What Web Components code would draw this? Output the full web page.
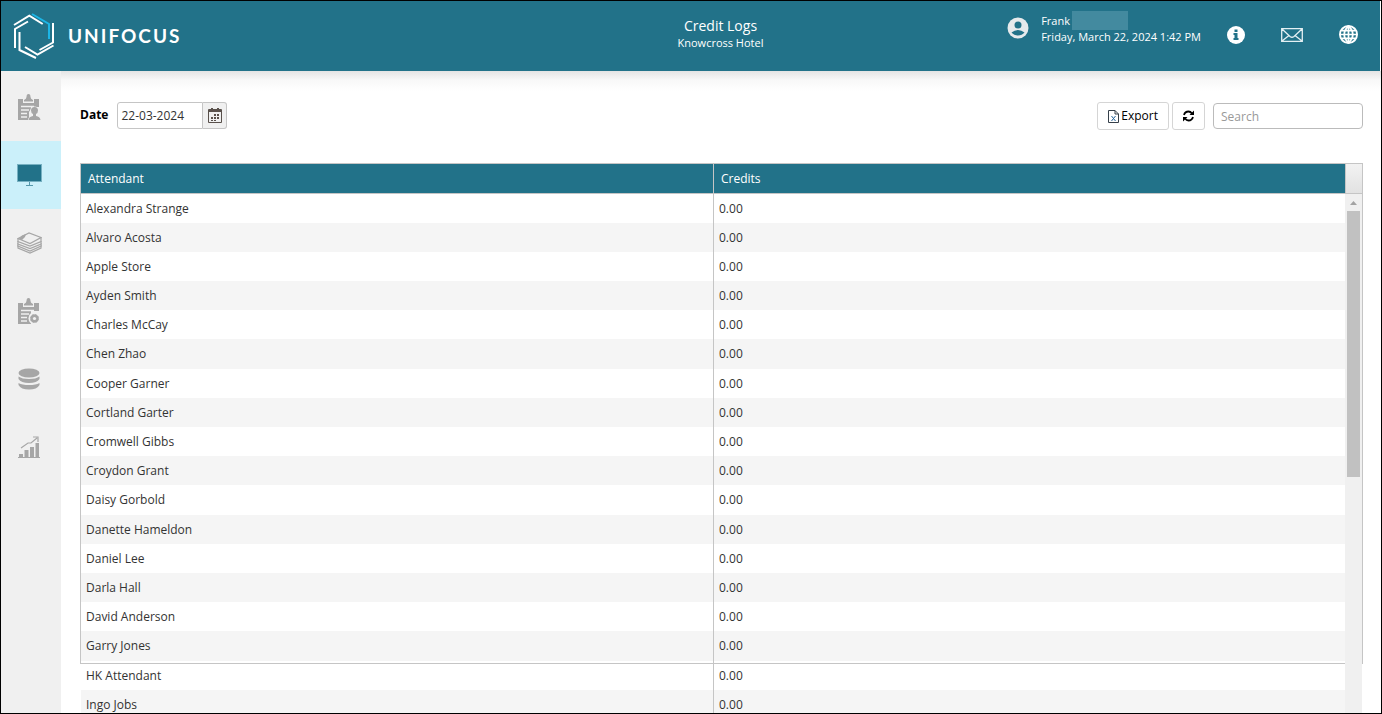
<!DOCTYPE html>
<html lang="en">
<head>
<meta charset="utf-8">
<meta name="viewport" content="width=device-width, initial-scale=1">
<title>Credit Logs</title>
<style>
    body {
        margin: 0;
        font: 12px/16px "Open Sans", "Noto Sans", sans-serif;
        color: #333;
        background: #fff;
    }
</style>
</head>
<body>
<app-shell>
    <app-header slot="header" hotel="Knowcross Hotel" date="Friday, March 22, 2024 1:42 PM">Credit Logs</app-header>
    <side-nav slot="nav"></side-nav>
    <filter-bar date="22-03-2024"></filter-bar>
    <credit-grid></credit-grid>
</app-shell>

<script>
class AppShell extends HTMLElement {
    constructor() {
        super();
        this.attachShadow({mode: "open"}).innerHTML = `
        <style>
            :host {
                display: grid;
                grid-template-columns: 60px 1fr;
                grid-template-rows: auto 1fr;
                height: 100vh;
                box-sizing: border-box;
                border: 1px solid #000;
                overflow: hidden;
            }
            .header {
                grid-column: 1 / 3;
                padding-right: 1px;
            }
            nav {
                background: #f0f0f0;
            }
            main {
                min-width: 0;
                min-height: 0;
                padding: 31px 18px 0 19px;
                background: linear-gradient(#e4e4e4, #f8f8f8 9px, #fff 20px);
            }
        </style>
        <div class="header"><slot name="header"></slot></div>
        <nav><slot name="nav"></slot></nav>
        <main><slot></slot></main>`;
    }
}

class AppHeader extends HTMLElement {
    connectedCallback() {
        this.attachShadow({mode: "open"}).innerHTML = `
        <style>
            :host {
                display: grid;
                grid-template-columns: 60px 1fr auto 1fr;
                height: 70px;
                color: #fff;
                background: #227289;
            }
            a, svg {
                display: block;
            }
            .brand {
                grid-column: 1 / 3;
                display: flex;
                align-items: center;
                gap: 13px;
                padding-left: 12px;
                color: inherit;
                text-decoration: none;
                font: bold 19px/24px Lato, sans-serif;
                letter-spacing: 2px;
            }
            .title {
                padding-top: 16px;
                text-align: center;
                font-weight: 500;
                font-size: 11px;
            }
            h1 {
                margin: 0;
                font-size: 14px;
                line-height: 18px;
                font-weight: 400;
            }
            .tools {
                display: flex;
                justify-content: flex-end;
                align-items: flex-start;
                padding: 12px 22px 0 0;
            }
            .user {
                display: flex;
                gap: 12px;
                margin-right: 26px;
                font-size: 11px;
                font-weight: 500;
                white-space: nowrap;
            }
            .user svg {
                margin-top: 4px;
            }
            .name {
                display: flex;
                gap: 2px;
            }
            .mask {
                width: 56px;
                height: 19px;
                margin: -2px 0;
                background: #438a9f;
            }
            .links {
                display: flex;
                align-items: center;
                gap: 36px;
                padding-top: 12px;
            }
        </style>
        <a class="brand" href="#" aria-label="Unifocus">
            <svg width="42" height="46" viewBox="0 0 42 46" fill="none" stroke="#fff" stroke-width="2">
                <path d="M1 12L16.300 2.700L29.700 11"/>
                <path d="M2 35V16L15 8.500"/>
                <path d="M6.500 19V37L23 45"/>
                <path d="M12 34L24.500 41.500L40.500 32.500"/>
                <path d="M26.500 37L40 29.500V10"/>
                <path d="M19 1L36 11V26" stroke="#1cb5e6"/>
            </svg>
            <span>UNIFOCUS</span>
        </a>
        <div class="title">
            <h1><slot></slot></h1>
            <div>${this.getAttribute("hotel")}</div>
        </div>
        <div class="tools">
            <div class="user">
                <svg width="22" height="22" viewBox="0 0 22 22">
                    <circle cx="11" cy="11" r="10.500" fill="#e6eaec"/>
                    <circle cx="11" cy="8" r="3.500" fill="#227289"/>
                    <path d="M4.500 15.500Q7.500 13 11 13T17.500 15.500Q15 18.500 11 18.500T4.500 15.500Z" fill="#227289"/>
                </svg>
                <div>
                    <div class="name">Frank <span class="mask"></span></div>
                    <div>${this.getAttribute("date")}</div>
                </div>
            </div>
            <div class="links">
                <a href="#" aria-label="Information">
                    <svg width="18" height="18" viewBox="0 0 18 18">
                        <circle cx="9" cy="9" r="9" fill="#fff"/>
                        <path d="M7.500 3.500H10.500V6H7.500ZM6.500 7H10.500V12H11.500V14H6.500V12H7.500V9H6.500Z" fill="#227289"/>
                    </svg>
                </a>
                <a href="#" aria-label="Messages">
                    <svg width="22" height="14" viewBox="0 0 22 14" fill="none" stroke="#e4f0f3" stroke-width="1.300">
                        <path d="M.7.700H21.300V13.300H.7ZM1 1L9 8.500Q11 10 13 8.500L21 1M1 13L8 7.500M21 13L14 7.500"/>
                    </svg>
                </a>
                <a href="#" aria-label="Language">
                    <svg width="19" height="19" viewBox="0 0 20 20" fill="none">
                        <circle cx="10" cy="10" r="9" stroke="#fff" stroke-width="2"/>
                        <path d="M10 1V19M3 6H17M1 10H19M3 14H17M10 1Q1 10 10 19M10 1Q19 10 10 19" stroke="#fff" stroke-width="1.800"/>
                    </svg>
                </a>
            </div>
        </div>`;
    }
}

const clipboard = `
    <path d="M1 5H6V9H17V5H22V13H1ZM1 12H14V15L12 18V23H14V26H1Z"/>
    <path d="M7 7.500V6Q9.500 5 9.500 3Q9.500 0 11.500 0T13.500 3Q13.500 5 16 6V7.500Z"/>
    <path d="M4 12.500H17M4 16H12M4 19.500H10M4 23H10" stroke="#f0f0f0" stroke-width="1.300"/>`;

const navItems = [
    {label: "Assignments", icon: clipboard + `
        <path d="M14 16.500Q14 13 17.500 13T21 16.500Q21 19 19 20V22Q23 22.500 23.500 26H11.500Q12 22.500 16 22V20Q14 19 14 16.500Z" stroke="#f0f0f0" stroke-width="1.200" paint-order="stroke"/>`},
    {label: "Monitor", active: true, icon: `
        <path d="M0 2H25V20H0Z" opacity=".5"/>
        <path d="M1 3H24V19H1Z"/>
        <path d="M12 20H13V23H16V24H9V23H12Z" opacity=".7"/>`},
    {label: "Layers", icon: `
        <g fill="#f0f0f0" stroke="#a6a6a6" stroke-width="1.200">
            <path d="M1 15V18L13 23L24 18V15"/>
            <path d="M1 13V16L13 21L24 16V13"/>
            <path d="M1 11V14L13 18.500L24 14V11"/>
            <path d="M1 9V11.500L13 16L24 11.500V8"/>
            <path d="M1 8.500L12 3L24 7.500L13 13.500Z"/>
        </g>
        <path d="M2 9L5 5.500L9 4L8 7L5 10Z"/>`},
    {label: "Task setup", icon: clipboard + `
        <circle cx="17.500" cy="20.500" r="6" fill="#f0f0f0"/>
        <circle cx="17.500" cy="20.500" r="4" stroke="currentColor" stroke-width="1" stroke-dasharray="2 1.100"/>
        <circle cx="17.500" cy="20.500" r="1.600" fill="#f0f0f0"/>`},
    {label: "Master data", icon: `
        <ellipse cx="12" cy="7" rx="10.500" ry="4.500"/>
        <path d="M1.500 10.500Q5 13 12 13T22.500 10.500V13Q20 17 12 17T1.500 13ZM1.500 17Q5 19 12 19T22.500 17V19Q20 23.500 12 23.500T1.500 19Z"/>`},
    {label: "Reports", icon: `
        <path d="M2 23V20H6V23H7.500V16H11.500V23H13V13H17V23H18.500V9H22V23H23V24H1V23Z"/>
        <path d="M4 14L11 9H14L20 4M16 3H21V8" fill="none" stroke="#a6a6a6" stroke-width="1.200"/>`}
];

class SideNav extends HTMLElement {
    constructor() {
        super();
        this.attachShadow({mode: "open"}).innerHTML = `
        <style>
            :host {
                display: block;
                padding-top: 2px;
            }
            a {
                display: flex;
                align-items: center;
                height: 68px;
                padding-left: 16px;
                color: #a6a6a6;
            }
            .active {
                color: #227289;
                background: #cbf0fa;
            }
        </style>
        ${navItems.map(item => `
        <a href="#" class="${item.active ? "active" : ""}" aria-label="${item.label}">
            <svg width="25" height="26" viewBox="0 0 25 26" fill="currentColor">${item.icon}</svg>
        </a>`).join("")}`;
    }
}

class FilterBar extends HTMLElement {
    connectedCallback() {
        this.attachShadow({mode: "open"}).innerHTML = `
        <style>
            :host {
                display: flex;
                justify-content: space-between;
                height: 28px;
                margin-bottom: 33px;
            }
            div {
                display: flex;
                align-items: center;
            }
            .field {
                align-items: flex-start;
            }
            label {
                margin-right: 9px;
                line-height: 26px;
                font-weight: bold;
                color: #000;
            }
            input, button {
                box-sizing: border-box;
                margin: 0;
                font: inherit;
                color: #333;
                background: #fff;
                border: 1px solid #d5d5d5;
                border-radius: 3px;
            }
            .date {
                width: 86px;
                height: 27px;
                padding: 0 3px;
                border-color: #c5c5c5;
                border-radius: 3px 0 0 3px;
            }
            .pick {
                display: flex;
                align-items: center;
                justify-content: center;
                width: 24px;
                height: 27px;
                padding: 0;
                border-color: #c5c5c5;
                border-left: 0;
                border-radius: 0 3px 3px 0;
                background: #f0f0f0;
            }
            .actions {
                gap: 3px;
            }
            .actions button {
                display: flex;
                align-items: center;
                gap: 2px;
                height: 28px;
                padding: 0 10px;
                color: #000;
            }
            .search {
                width: 150px;
                height: 26px;
                margin-left: 5px;
                padding: 0 7px;
                border-color: #bbb;
                border-radius: 4px;
            }
            .search::placeholder {
                color: #999;
            }
        </style>
        <div class="field">
            <label for="date">Date</label>
            <input class="date" id="date" type="text" value="${this.getAttribute("date")}">
            <button class="pick" aria-label="Pick a date">
                <svg width="14" height="15" viewBox="0 0 14 15" fill="#59504b">
                    <path d="M1 1H13V4H1Z"/>
                    <path d="M.5 1.500H13.500V14.500H.5Z" fill="none" stroke="#59504b"/>
                    <path d="M3 0H5V3H3ZM9 0H11V3H9Z"/>
                    <path d="M6 6H8V8H6ZM9 6H11V8H9ZM3 9H5V11H3ZM6 9H8V11H6ZM9 9H11V11H9ZM3 12H5V13H3ZM6 12H8V13H6Z"/>
                </svg>
            </button>
        </div>
        <div class="actions">
            <button>
                <svg width="11" height="13" viewBox="0 0 11 13" fill="none" stroke="#36404a">
                    <path d="M.5.500H7L10.500 4V12.500H.5ZM7 .5V4H10.500"/>
                    <path d="M3.500 6L7.500 11M7.500 6L3.500 11" stroke="#24649b"/>
                </svg>
                Export
            </button>
            <button aria-label="Refresh">
                <svg width="11" height="12" viewBox="0 0 11 12">
                    <path d="M1 5Q2 1.500 5.500 1.500Q7.500 1.500 9 3.500M10 7Q9 10.500 5.500 10.500Q3.500 10.500 2 8.500" fill="none" stroke="#000" stroke-width="1.800"/>
                    <path d="M11 .5V5H6.500ZM0 11.500V7H4.500Z"/>
                </svg>
            </button>
            <input class="search" type="search" placeholder="Search" aria-label="Search">
        </div>`;
    }
}

const attendants = [
    "Alexandra Strange", "Alvaro Acosta", "Apple Store", "Ayden Smith", "Charles McCay", "Chen Zhao",
    "Cooper Garner", "Cortland Garter", "Cromwell Gibbs", "Croydon Grant", "Daisy Gorbold",
    "Danette Hameldon", "Daniel Lee", "Darla Hall", "David Anderson", "Garry Jones", "HK Attendant",
    "Ingo Jobs"
];

class CreditGrid extends HTMLElement {
    constructor() {
        super();
        this.attachShadow({mode: "open"}).innerHTML = `
        <style>
            :host {
                display: flex;
                box-sizing: border-box;
                height: calc(100vh - 213px);
                border: 1px solid #c5c5c5;
            }
            table {
                flex: 1;
                height: max-content;
                table-layout: fixed;
                border-collapse: separate;
                border-spacing: 0;
            }
            th, td {
                box-sizing: border-box;
                width: 50%;
                height: 29px;
                padding: 0 5px;
                text-align: left;
            }
            th {
                height: 30px;
                padding: 0 7px;
                font-weight: 500;
                color: #fff;
                background: #227289;
                border-bottom: 1px solid #c5c5c5;
            }
            th + th, td + td {
                border-left: 1px solid #c5c5c5;
            }
            tbody tr:nth-child(even) {
                background: rgba(0, 0, 0, 0.04);
            }
            tbody tr:nth-child(5n + 6) td {
                height: 30px;
            }
            .rail {
                display: flex;
                flex-direction: column;
                width: 17px;
                height: calc(100vh - 165px);
                background: #f0f0f0;
            }
            .corner {
                box-sizing: border-box;
                height: 30px;
                border-left: 1px solid #c5c5c5;
                border-bottom: 1px solid #c5c5c5;
                background: linear-gradient(#f2f2f2, #e2e2e2);
            }
            .rail svg {
                display: block;
                margin: 7px auto 6px;
            }
            .thumb {
                height: 266px;
                margin: 0 2px;
                background: #c1c1c1;
            }
        </style>
        <table>
            <thead>
                <tr><th>Attendant</th><th>Credits</th></tr>
            </thead>
            <tbody>
                ${attendants.map(name => `<tr><td>${name}</td><td>0.00</td></tr>`).join("")}
            </tbody>
        </table>
        <div class="rail">
            <div class="corner"></div>
            <svg width="7" height="4" viewBox="0 0 7 4"><path d="M0 4L3.500 0L7 4Z" fill="#a3a3a3"/></svg>
            <div class="thumb"></div>
        </div>`;
    }
}

customElements.define("app-shell", AppShell);
customElements.define("app-header", AppHeader);
customElements.define("side-nav", SideNav);
customElements.define("filter-bar", FilterBar);
customElements.define("credit-grid", CreditGrid);
</script>
</body>
</html>
